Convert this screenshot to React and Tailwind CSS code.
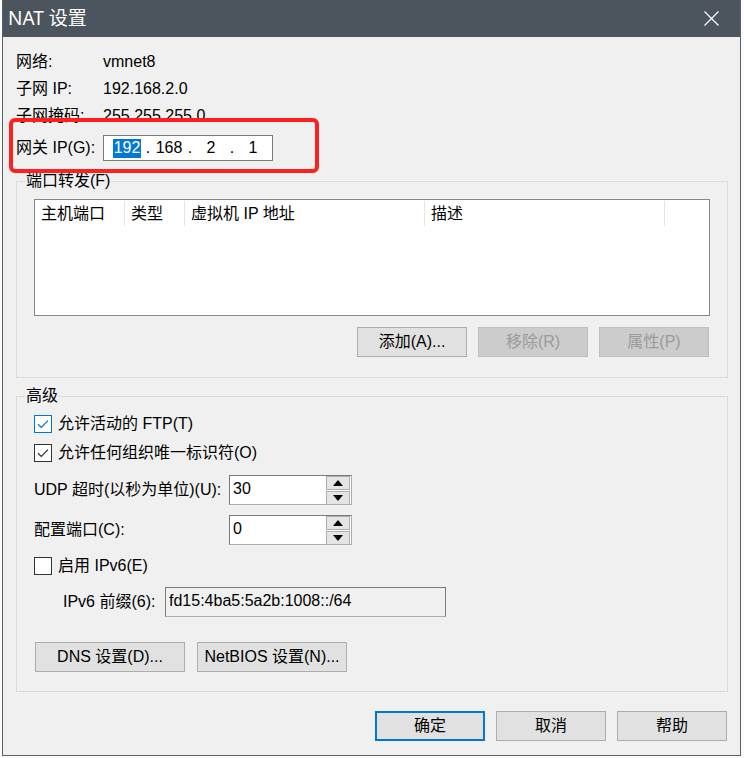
import React from "react";

const font = "font-['Liberation_Sans','Noto_Sans_CJK_SC',sans-serif]";

function Btn({ children, disabled, primary, className = "" }) {
  const base = "h-[30px] flex items-center justify-center text-[16px] box-border";
  if (disabled) {
    return (
      <div className={`${base} bg-[#cccccc] border border-[#bfbfbf] text-[#9b9b9b] ${className}`}>
        {children}
      </div>
    );
  }
  if (primary) {
    return (
      <div className={`${base} bg-[#e1e1e1] border-2 border-[#0078d7] text-black ${className}`}>
        {children}
      </div>
    );
  }
  return (
    <div className={`${base} bg-[#e1e1e1] border border-[#adadad] text-black ${className}`}>
      {children}
    </div>
  );
}

function Check({ checked, focused }) {
  return (
    <div
      className={`w-[18px] h-[18px] shrink-0 bg-white border ${
        focused ? "border-[#0078d7]" : "border-[#333333]"
      } flex items-center justify-center`}
    >
      {checked && (
        <svg width="16" height="16" viewBox="0 0 16 16">
          <path
            d="M3 8.2 L6.3 11.4 L13 4.6"
            fill="none"
            stroke={focused ? "#0078d7" : "#333333"}
            strokeWidth="1.3"
          />
        </svg>
      )}
    </div>
  );
}

function Spin({ value }) {
  return (
    <div className="relative w-[123px] h-[30px] bg-white border border-[#7a7a7a] border-r-[#acacac] border-b-[#acacac] flex items-center">
      <span className="pl-[3px] -mt-[2px]">{value}</span>
      <div className="absolute right-[1px] top-0 flex flex-col gap-[1px]">
        {["up", "down"].map((d) => (
          <div
            key={d}
            className="w-[24px] h-[14px] bg-[#e5e5e5] border border-[#adadad] flex items-center justify-center"
          >
            <svg width="10" height="6" viewBox="0 0 10 6">
              {d === "up" ? (
                <polygon points="0,6 10,6 5,0" fill="#000" />
              ) : (
                <polygon points="0,0 10,0 5,6" fill="#000" />
              )}
            </svg>
          </div>
        ))}
      </div>
    </div>
  );
}

function Group({ title, className = "", children }) {
  return (
    <div className={`relative border border-[#dcdcdc] ${className}`}>
      <span className="absolute -top-[11px] left-[8px] px-[1px] bg-[#f0f0f0] leading-[20px]">
        {title}
      </span>
      {children}
    </div>
  );
}

export default function App() {
  const cols = [
    { name: "主机端口", w: "w-[90px]" },
    { name: "类型", w: "w-[60px]" },
    { name: "虚拟机 IP 地址", w: "w-[240px]" },
    { name: "描述", w: "w-[240px]" },
  ];

  return (
    <div className={`w-[744px] h-[758px] bg-[#fbfbfb] overflow-hidden ${font} text-[16px] text-black`}>
      <div className="relative ml-[2px] w-[739px] h-[756px] bg-[#f0f0f0] border-x border-b border-[#5b6066] flex flex-col">
        {/* title bar */}
        <div className="h-[37px] bg-[#4c545d] flex items-center justify-between pl-[5px] pr-[21px] text-white shrink-0">
          <span className="text-[19px] leading-none -mt-[1px] font-['Noto_Sans','Noto_Sans_CJK_SC',sans-serif]">NAT 设置</span>
          <svg width="15" height="15" viewBox="0 0 15 15">
            <path d="M0.5 0.5 L14.5 14.5 M14.5 0.5 L0.5 14.5" stroke="#fff" strokeWidth="1.2" />
          </svg>
        </div>

        <div className="pl-[13px] pr-[12px]">
          <div className="pt-[11px]">
            {[
              ["网络:", "vmnet8"],
              ["子网 IP:", "192.168.2.0"],
              ["子网掩码:", "255.255.255.0"],
            ].map(([k, v]) => (
              <div key={k} className="h-[27px] flex items-center">
                <span className="w-[87px]">{k}</span>
                <span>{v}</span>
              </div>
            ))}
          </div>

          <div className="mt-[6px] h-[26px] flex items-center">
            <span className="w-[87px]">网关 IP(G):</span>
            <div className="w-[170px] h-[26px] bg-white border border-[#7a7a7a] flex items-center pl-[9px]">
              <span className="w-[28px] h-[19px] bg-[#0078d7] text-white flex items-center justify-center">192</span>
              <span className="w-[14px] text-center">.</span>
              <span className="w-[28px] text-center">168</span>
              <span className="w-[14px] text-center">.</span>
              <span className="w-[28px] text-center">2</span>
              <span className="w-[14px] text-center">.</span>
              <span className="w-[28px] text-center">1</span>
            </div>
          </div>

          <Group title="端口转发(F)" className="mt-[20px] h-[197px] px-[17px] pt-[17px]">
            <div className="w-[676px] h-[117px] bg-white border border-[#828790]">
              <div className="flex h-[27px]">
                {cols.map((c) => (
                  <div key={c.name} className={`${c.w} h-[25px] mt-[1px] border-r border-[#e5e5e5] flex items-center pl-[6px]`}>
                    {c.name}
                  </div>
                ))}
              </div>
            </div>
            <div className="w-[676px] mt-[11px] flex justify-end gap-[11px] pr-[1px]">
              <Btn className="w-[110px]">添加(A)...</Btn>
              <Btn className="w-[110px]" disabled>移除(R)</Btn>
              <Btn className="w-[110px]" disabled>属性(P)</Btn>
            </div>
          </Group>

          <Group title="高级" className="mt-[18px] h-[296px] px-[17px] pt-[18px]">
            <div className="flex items-center h-[18px]">
              <Check checked focused />
              <span className="ml-[6px]">允许活动的 FTP(T)</span>
            </div>
            <div className="flex items-center h-[18px] mt-[11px]">
              <Check checked />
              <span className="ml-[6px]">允许任何组织唯一标识符(O)</span>
            </div>
            <div className="flex items-center h-[30px] mt-[13px]">
              <span className="w-[195px]">UDP 超时(以秒为单位)(U):</span>
              <Spin value="30" />
            </div>
            <div className="flex items-center h-[30px] mt-[10px]">
              <span className="w-[195px]">配置端口(C):</span>
              <Spin value="0" />
            </div>
            <div className="flex items-center h-[18px] mt-[12px]">
              <Check />
              <span className="ml-[6px]">启用 IPv6(E)</span>
            </div>
            <div className="flex items-center h-[30px] mt-[12px] pl-[29px]">
              <span className="w-[102px]">IPv6 前缀(6):</span>
              <div className="w-[281px] h-[30px] bg-[#f0f0f0] border border-[#7a7a7a] border-b-[#adadad] flex items-center pl-[3px]">
                <span className="-mt-[3px]">fd15:4ba5:5a2b:1008::/64</span>
              </div>
            </div>
            <div className="flex mt-[25px] ml-[1px] gap-[12px]">
              <Btn className="w-[150px]">DNS 设置(D)...</Btn>
              <Btn className="w-[150px]">NetBIOS 设置(N)...</Btn>
            </div>
          </Group>

          <div className="mt-[19px] flex justify-end gap-[11px] pr-[1px]">
            <Btn className="w-[110px]" primary>确定</Btn>
            <Btn className="w-[110px]">取消</Btn>
            <Btn className="w-[110px]">帮助</Btn>
          </div>
        </div>

        {/* annotation overlay */}
        <div className="absolute left-[6px] top-[118px] w-[310px] h-[55px] border-[4px] border-[#ff1f1f] rounded-[6px] pointer-events-none" />
      </div>
    </div>
  );
}
